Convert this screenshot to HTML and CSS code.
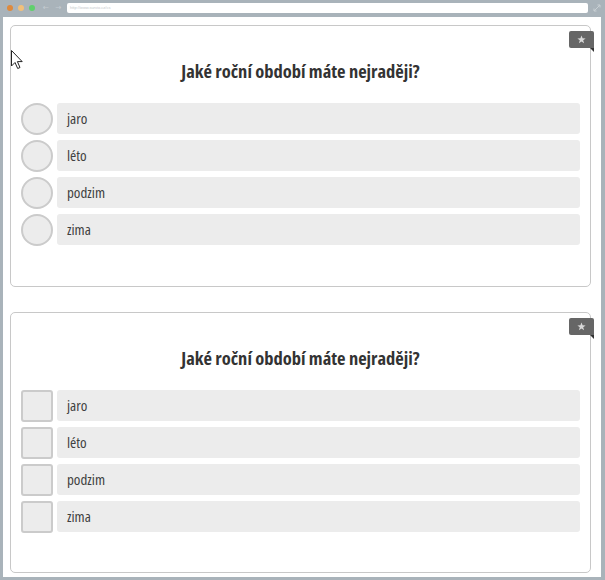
FILE: index.html
```html
<!DOCTYPE html>
<html lang="cs">
<head>
<meta charset="utf-8">
<title>Anketa</title>
<link rel="stylesheet" href="styles.css">
</head>
<body>
<div class="browser">
  <div class="chrome">
    <span class="dot dot-red"></span>
    <span class="dot dot-yellow"></span>
    <span class="dot dot-green"></span>
    <span class="arrow">&#8592;</span>
    <span class="arrow">&#8594;</span>
    <div class="url">http://www.survio.cz/cs</div>
    <svg class="expand" width="8" height="8" viewBox="0 0 8 8"><path d="M1 7 L7 1 M4.5 1 H7 V3.5 M1 4.5 V7 H3.5" stroke="#c9d0d4" stroke-width="1" fill="none"/></svg>
  </div>
  <div class="content">
    <section class="card">
      <span class="badge"><svg width="9" height="9" viewBox="0 0 10 10"><path d="M5 0.5 L6.2 3.7 L9.6 3.8 L6.9 5.9 L7.9 9.2 L5 7.3 L2.1 9.2 L3.1 5.9 L0.4 3.8 L3.8 3.7 Z" fill="#d8d8d8"/></svg></span>
      <h2 class="question">Jaké roční období máte nejraději?</h2>
      <div class="options">
        <label class="option"><span class="mark radio"></span><span class="text">jaro</span></label>
        <label class="option"><span class="mark radio"></span><span class="text">léto</span></label>
        <label class="option"><span class="mark radio"></span><span class="text">podzim</span></label>
        <label class="option"><span class="mark radio"></span><span class="text">zima</span></label>
      </div>
    </section>
    <section class="card">
      <span class="badge"><svg width="9" height="9" viewBox="0 0 10 10"><path d="M5 0.5 L6.2 3.7 L9.6 3.8 L6.9 5.9 L7.9 9.2 L5 7.3 L2.1 9.2 L3.1 5.9 L0.4 3.8 L3.8 3.7 Z" fill="#d8d8d8"/></svg></span>
      <h2 class="question">Jaké roční období máte nejraději?</h2>
      <div class="options">
        <label class="option"><span class="mark check"></span><span class="text">jaro</span></label>
        <label class="option"><span class="mark check"></span><span class="text">léto</span></label>
        <label class="option"><span class="mark check"></span><span class="text">podzim</span></label>
        <label class="option"><span class="mark check"></span><span class="text">zima</span></label>
      </div>
    </section>
    <svg class="cursor" width="14" height="20" viewBox="0 0 14 20"><path d="M0.5 0.5 V16 L4 12.5 L6.7 18.5 L9 17.5 L6.4 11.6 H11.2 Z" fill="#fff" stroke="#222" stroke-width="1" stroke-linejoin="miter"/></svg>
  </div>
</div>
</body>
</html>
```
FILE: styles.css
```css
* { box-sizing: border-box; }
html, body { margin: 0; padding: 0; }
body {
  width: 605px;
  height: 580px;
  background: #a9b3ba;
  font-family: "Open Sans", "DejaVu Sans Condensed", sans-serif;
  font-stretch: 75%;
  overflow: hidden;
}
.browser {
  display: flex;
  flex-direction: column;
  height: 580px;
}
.chrome {
  height: 17px;
  display: flex;
  align-items: center;
  padding: 0 0 1px 7px;
}
.dot {
  width: 6px;
  height: 6px;
  border-radius: 50%;
  margin-right: 5px;
}
.dot-red { background: #de8a3e; }
.dot-yellow { background: #f2c07a; }
.dot-green { background: #5fd06c; }
.arrow {
  color: #c5ccd1;
  font-family: "DejaVu Sans", sans-serif;
  font-size: 8px;
  width: 12px;
  line-height: 8px;
  text-align: center;
}
.url {
  margin-left: 3px;
  width: 521px;
  height: 10px;
  background: #fff;
  border-radius: 2px;
  font-family: "Liberation Sans", sans-serif;
  font-stretch: normal;
  font-size: 4px;
  line-height: 10px;
  color: #c4c8cb;
  padding-left: 3px;
}
.expand { margin-left: 5px; }
.content {
  position: relative;
  flex: 1;
  background: #fff;
  margin: 0 4px 3px 3px;
  padding: 8px 10px 0 7px;
  display: flex;
  flex-direction: column;
  gap: 25px;
}
.card {
  position: relative;
  border: 1px solid #c8c8c8;
  border-radius: 5px;
  height: 262px;
  padding: 0 10px 0 10px;
}
.card + .card { height: 261px; }
.badge {
  position: absolute;
  top: 5px;
  right: -4px;
  width: 25px;
  height: 17px;
  background: #666;
  border-radius: 2px 2px 0 2px;
  display: flex;
  align-items: center;
  justify-content: center;
}
.badge::after {
  content: "";
  position: absolute;
  right: 0;
  bottom: -4px;
  border-top: 4px solid #333;
  border-left: 4px solid transparent;
}
.question {
  margin: 33px 0 0;
  text-align: center;
  font-size: 18.5px;
  line-height: 24px;
  font-weight: bold;
  color: #333;
}
.options {
  margin-top: 20px;
  display: flex;
  flex-direction: column;
  gap: 5px;
}
.option {
  display: flex;
  align-items: center;
  gap: 4px;
  height: 32px;
}
.mark {
  width: 32px;
  height: 32px;
  flex: none;
  background: #ececec;
  border: 2px solid #cbcbcb;
}
.radio { border-radius: 50%; }
.check { border-radius: 3px; }
.text {
  flex: 1;
  height: 31px;
  align-self: flex-start;
  background: #ececec;
  border-radius: 3px;
  padding-left: 10px;
  font-size: 15px;
  font-stretch: 80%;
  line-height: 31px;
  color: #404040;
}
.cursor {
  position: absolute;
  left: 8px;
  top: 33px;
}
```
